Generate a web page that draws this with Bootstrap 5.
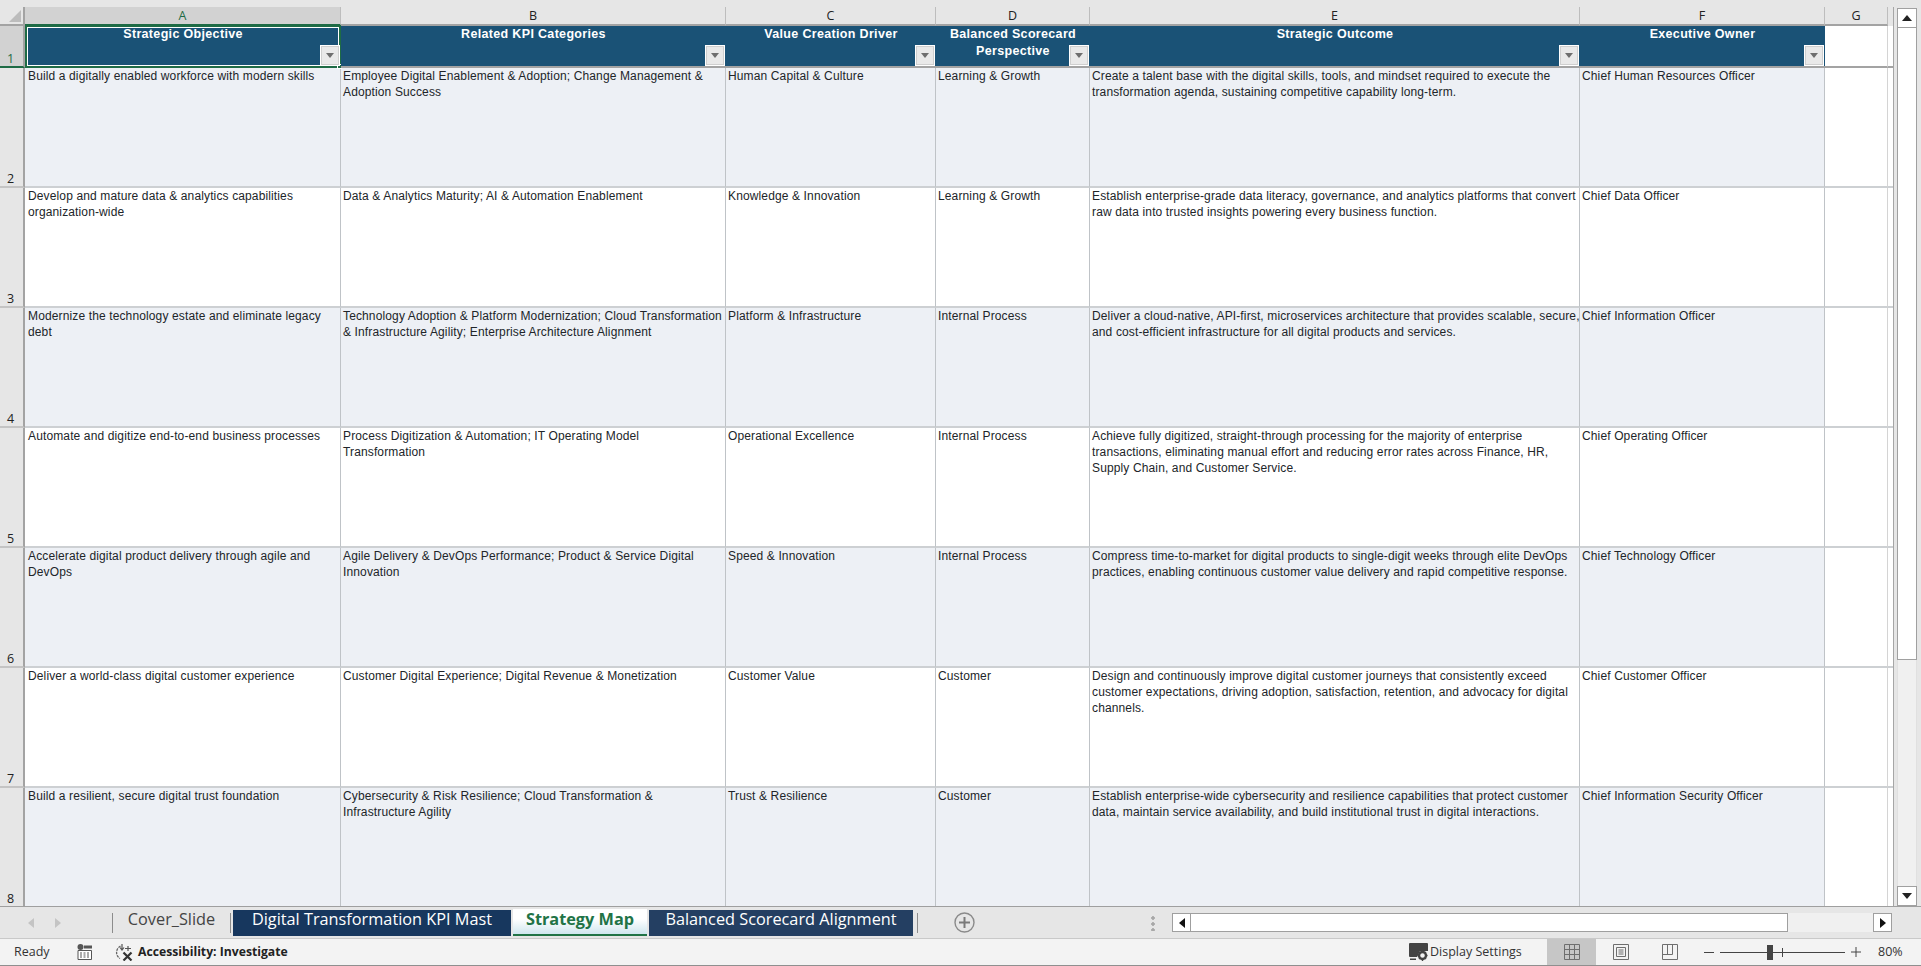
<!DOCTYPE html>
<html lang="en">
<head>
<meta charset="utf-8">
<title>Strategy Map</title>
<link rel="stylesheet" href="https://cdn.jsdelivr.net/npm/bootstrap@5.3.0/dist/css/bootstrap.min.css">
<style>
html,body{height:966px;overflow:hidden;background:#e6e6e6}
body{font-family:"Liberation Sans",Arial,sans-serif;color:#000}
.xl-top{height:7px;background:#e6e6e6}
.xl-main{height:899px}
.xl-pane{width:1894px;height:899px;overflow:hidden;background:#fff;border-right:1px solid #a6a6a6;position:relative}
.xl-right{width:27px;padding-left:3px;background:#e6e6e6;margin-top:-7px}
.xl-sheet{table-layout:fixed;width:1894px;border-collapse:separate;border-spacing:0;margin:0}
.xl-sheet>*>tr>*{padding:0;border:0;box-shadow:none;background:transparent;color:inherit}
.xl-sheet thead tr.xl-cols{height:19px}
.xl-sheet tr.xl-cols th{background:#e6e6e6;border-right:1px solid #bdbdbd;border-bottom:2px solid #a3a3a3;font:400 12.5px/17px "Open Sans",sans-serif;text-align:center;color:#222;vertical-align:middle}
.xl-sheet tr.xl-cols th.xl-sel{background:#d2d2d2;color:#1e6b45;border-bottom-color:#1e6b45}
.xl-sheet tr.xl-cols th.xl-corner{border-right:2px solid #a3a3a3;position:relative}
.xl-corner svg{position:absolute;left:9px;top:3px}
.xl-sheet tbody tr{height:120px}
.xl-sheet tbody tr.xl-head{height:42px}
.xl-sheet tbody th.xl-rn{background:#e6e6e6;border-right:2px solid #a3a3a3;border-bottom:2px solid #c4c4c4;font:400 12.5px/14px "Open Sans",sans-serif;text-align:center;vertical-align:bottom;color:#222;padding-bottom:0;padding-right:2px}
.xl-sheet tbody th.xl-rn.xl-sel{background:#d2d2d2;color:#1e6b45;border-bottom-color:#1e6b45}
.xl-sheet tbody td{font:400 12px/16px "Liberation Sans",Arial,sans-serif;vertical-align:top;padding:0 0 0 2px;border-right:1px solid #bfc3c7;border-bottom:2px solid #cdd0d3;letter-spacing:.13px;background:#fff}
.xl-sheet tbody td:nth-child(2){padding-left:3px}
.xl-sheet tbody td.xl-nw{white-space:nowrap}
.xl-sheet tbody tr.xl-band td{background:#edf0f5}
.xl-sheet tbody td.xl-blank,.xl-sheet tbody tr.xl-band td.xl-blank{background:#fff;border-right-color:#d4d4d4}
.xl-sheet tbody tr.xl-head td.xl-blank{border-bottom-color:#a3a3a3}
.xl-sheet tbody tr.xl-head td.xl-h{background:#1a5276;color:#fff;font-weight:700;font-size:12.5px;text-align:center;line-height:17px;position:relative;padding:0 2px;border-right:0;border-bottom:2px solid #a3a3a3;letter-spacing:.33px}
.xl-filter{position:absolute;right:1px;bottom:0;width:20px;height:21px;background:#e9e9e9;border:1px solid #fff;box-shadow:inset 0 0 0 1px #cfcfcf;display:flex;align-items:center;justify-content:center}
.xl-filter i{display:block;width:0;height:0;border:4px solid transparent;border-top:5px solid #6e6e6e;border-bottom:0}
.xl-selbox{position:absolute;left:0;right:0;top:-1px;bottom:-2px;border:2px solid #1e6b45;box-shadow:inset 0 0 0 1px #fff;pointer-events:none}
.xl-handle{position:absolute;right:-3px;bottom:-3px;width:5px;height:5px;background:#1e6b45;border:1px solid #fff}
.xl-vbtn{width:20px;height:20px;background:#fff;border:1px solid #a0a0a0;display:flex;align-items:center;justify-content:center}
.xl-vup{margin-top:8px}
.xl-arr-u{border:5px solid transparent;border-bottom:6px solid #222;border-top:0}
.xl-arr-d{border:5px solid transparent;border-top:6px solid #222;border-bottom:0}
.xl-arr-l{border:5px solid transparent;border-right:6px solid #111;border-left:0}
.xl-arr-r{border:5px solid transparent;border-left:6px solid #111;border-right:0}
.xl-vthumb{width:20px;height:632px;background:#fff;border:1px solid #a0a0a0;border-top:0}
.xl-vtrack{width:20px;height:226px;background:#f0f0f0;border-left:1px solid #e0e0e0;border-right:1px solid #e0e0e0}
.xl-tabs{height:31px;background:#e6e6e6;border-top:1px solid #9f9f9f;border-bottom:1px solid #c9c9c9;font:400 16.3px/18px "Open Sans",sans-serif;box-sizing:content-box}
.xl-nav{width:112px;padding-left:28px;gap:21px;height:100%}
.xl-nav i{display:block;border:5px solid transparent}
.xl-nav i.l{border-right:6px solid #c4c4c4;border-left:0}
.xl-nav i.r{border-left:6px solid #c4c4c4;border-right:0}
.xl-sep{width:1px;height:20px;background:#8c8c8c;flex:none}
.xl-tab{height:26px;flex:none;text-align:center;white-space:nowrap;margin-top:1px;margin-bottom:1px}
.xl-t0{width:117px;color:#444}
.xl-t1{width:278px;margin-left:2px;background:#17375e;color:#fff}
.xl-t2{width:134px;margin-left:2px;color:#217346;font-weight:700;background:linear-gradient(#fff 40%,#cfe6ee);border-bottom:2px solid #217346;height:27px;margin-top:0;padding-top:1px}
.xl-t3{width:264px;margin-left:2px;background:#243f62;color:#fff}
.xl-add{margin-left:36px;margin-right:176px;flex:none}
.xl-dots{flex:none;width:4px;height:16px;background:radial-gradient(circle,#a8a8a8 1.5px,transparent 2px) 0 0/4px 6px;margin-right:17px}
.xl-hbtn{width:19px;height:19px;background:#fff;border:1px solid #9f9f9f;display:flex;align-items:center;justify-content:center;flex:none}
.xl-hthumb{width:597px;height:19px;background:#fff;border:1px solid #9f9f9f;border-left:0;flex:none}
.xl-htrack{width:85px;height:19px;background:#f0f0f0;flex:none}
.xl-status{height:28px;background:#f3f3f3;border-bottom:2px solid #8f8f8f;font:400 12.5px/26px "Open Sans",sans-serif;color:#333}
.xl-ready{margin-left:14px;width:63px}
.xl-cal{flex:none;margin-right:22px}
.xl-acc{flex:none;margin-right:5px}
.xl-acct{font-weight:700;font-size:12.2px;color:#222;width:1271px;flex:none;white-space:nowrap}
.xl-disp{flex:none;margin-right:2px}
.xl-dispt{width:117px;flex:none;white-space:nowrap}
.xl-view{width:49px;height:26px;display:flex;align-items:center;justify-content:center;flex:none}
.xl-view.xl-on{background:#c6c6c6}
.xl-minus{width:10px;height:1px;background:#444;margin-left:10px;flex:none}
.xl-slide{width:125px;height:1px;background:#444;margin:0 6px;flex:none;position:relative}
.xl-knob{position:absolute;left:47px;top:-7px;width:6px;height:15px;background:#444}
.xl-tick{position:absolute;left:62px;top:-4px;width:1px;height:9px;background:#444}
.xl-plus{flex:none}
.xl-pct{margin-left:17px;flex:none;white-space:nowrap}
</style>
</head>
<body class="m-0">
<div class="d-flex flex-column overflow-hidden">
<div class="xl-top"></div>
<div class="xl-main d-flex">
<div class="xl-pane">
<table class="table xl-sheet">
<colgroup><col style="width:25px"><col style="width:316px"><col style="width:385px"><col style="width:210px"><col style="width:154px"><col style="width:490px"><col style="width:245px"><col style="width:63px"><col></colgroup>
<thead>
<tr class="xl-cols"><th class="xl-corner"><svg width="13" height="13" viewBox="0 0 13 13"><path d="M12 0V12H0Z" fill="#bcbcbc"/></svg></th><th class="xl-sel">A</th><th>B</th><th>C</th><th>D</th><th>E</th><th>F</th><th>G</th><th class="border-0"></th></tr>
</thead>
<tbody>
<tr class="xl-head"><th class="xl-rn xl-sel">1</th>
<td class="xl-h">Strategic Objective<span class="xl-selbox"><span class="xl-handle"></span></span><span class="xl-filter"><i></i></span></td>
<td class="xl-h">Related KPI Categories<span class="xl-filter"><i></i></span></td>
<td class="xl-h">Value Creation Driver<span class="xl-filter"><i></i></span></td>
<td class="xl-h">Balanced Scorecard Perspective<span class="xl-filter"><i></i></span></td>
<td class="xl-h">Strategic Outcome<span class="xl-filter"><i></i></span></td>
<td class="xl-h">Executive Owner<span class="xl-filter"><i></i></span></td>
<td class="xl-blank"></td><td class="xl-blank border-end-0"></td></tr>
<tr class="xl-band"><th class="xl-rn">2</th><td>Build a digitally enabled workforce with modern skills</td><td>Employee Digital Enablement &amp; Adoption; Change Management &amp; Adoption Success</td><td>Human Capital &amp; Culture</td><td>Learning &amp; Growth</td><td>Create a talent base with the digital skills, tools, and mindset required to execute the transformation agenda, sustaining competitive capability long-term.</td><td>Chief Human Resources Officer</td><td class="xl-blank"></td><td class="xl-blank border-end-0"></td></tr>
<tr><th class="xl-rn">3</th><td>Develop and mature data &amp; analytics capabilities organization-wide</td><td>Data &amp; Analytics Maturity; AI &amp; Automation Enablement</td><td>Knowledge &amp; Innovation</td><td>Learning &amp; Growth</td><td>Establish enterprise-grade data literacy, governance, and analytics platforms that convert raw data into trusted insights powering every business function.</td><td>Chief Data Officer</td><td class="xl-blank"></td><td class="xl-blank border-end-0"></td></tr>
<tr class="xl-band"><th class="xl-rn">4</th><td>Modernize the technology estate and eliminate legacy debt</td><td>Technology Adoption &amp; Platform Modernization; Cloud Transformation &amp; Infrastructure Agility; Enterprise Architecture Alignment</td><td>Platform &amp; Infrastructure</td><td>Internal Process</td><td class="xl-nw">Deliver a cloud-native, API-first, microservices architecture that provides scalable, secure,<br>and cost-efficient infrastructure for all digital products and services.</td><td>Chief Information Officer</td><td class="xl-blank"></td><td class="xl-blank border-end-0"></td></tr>
<tr><th class="xl-rn">5</th><td>Automate and digitize end-to-end business processes</td><td>Process Digitization &amp; Automation; IT Operating Model<br>Transformation</td><td>Operational Excellence</td><td>Internal Process</td><td>Achieve fully digitized, straight-through processing for the majority of enterprise transactions, eliminating manual effort and reducing error rates across Finance, HR, Supply Chain, and Customer Service.</td><td>Chief Operating Officer</td><td class="xl-blank"></td><td class="xl-blank border-end-0"></td></tr>
<tr class="xl-band"><th class="xl-rn">6</th><td>Accelerate digital product delivery through agile and DevOps</td><td>Agile Delivery &amp; DevOps Performance; Product &amp; Service Digital Innovation</td><td>Speed &amp; Innovation</td><td>Internal Process</td><td>Compress time-to-market for digital products to single-digit weeks through elite DevOps practices, enabling continuous customer value delivery and rapid competitive response.</td><td>Chief Technology Officer</td><td class="xl-blank"></td><td class="xl-blank border-end-0"></td></tr>
<tr><th class="xl-rn">7</th><td>Deliver a world-class digital customer experience</td><td>Customer Digital Experience; Digital Revenue &amp; Monetization</td><td>Customer Value</td><td>Customer</td><td>Design and continuously improve digital customer journeys that consistently exceed customer expectations, driving adoption, satisfaction, retention, and advocacy for digital channels.</td><td>Chief Customer Officer</td><td class="xl-blank"></td><td class="xl-blank border-end-0"></td></tr>
<tr class="xl-band"><th class="xl-rn">8</th><td>Build a resilient, secure digital trust foundation</td><td>Cybersecurity &amp; Risk Resilience; Cloud Transformation &amp; Infrastructure Agility</td><td>Trust &amp; Resilience</td><td>Customer</td><td>Establish enterprise-wide cybersecurity and resilience capabilities that protect customer data, maintain service availability, and build institutional trust in digital interactions.</td><td>Chief Information Security Officer</td><td class="xl-blank"></td><td class="xl-blank border-end-0"></td></tr>
</tbody>
</table>
</div>
<div class="xl-right d-flex flex-column">
<div class="xl-vbtn xl-vup"><span class="xl-arr-u"></span></div>
<div class="xl-vthumb"></div>
<div class="xl-vtrack"></div>
<div class="xl-vbtn"><span class="xl-arr-d"></span></div>
</div>
</div>
<div class="xl-tabs d-flex align-items-center">
<div class="xl-nav d-flex align-items-center"><i class="l"></i><i class="r"></i></div>
<span class="xl-sep"></span>
<div class="xl-tab xl-t0">Cover_Slide</div>
<span class="xl-sep"></span>
<div class="xl-tab xl-t1">Digital Transformation KPI Mast</div>
<div class="xl-tab xl-t2">Strategy Map</div>
<div class="xl-tab xl-t3">Balanced Scorecard Alignment</div>
<span class="xl-sep ms-1"></span>
<svg class="xl-add" width="21" height="21" viewBox="0 0 21 21"><circle cx="10.5" cy="10.5" r="9.5" fill="none" stroke="#8a8a8a" stroke-width="1.4"/><path d="M10.5 5v11M5 10.5h11" stroke="#7a7a7a" stroke-width="2"/></svg>
<span class="xl-dots"></span>
<div class="xl-hbtn"><span class="xl-arr-l"></span></div>
<div class="xl-hthumb"></div>
<div class="xl-htrack"></div>
<div class="xl-hbtn"><span class="xl-arr-r"></span></div>
</div>
<div class="xl-status d-flex align-items-center">
<div class="xl-ready">Ready</div>
<svg class="xl-cal" width="15" height="16" viewBox="0 0 15 16"><circle cx="3.5" cy="3" r="3" fill="#555"/><path d="M7 1.500h8v3H7z" fill="#555"/><path d="M1 6.500h13.500v9H1z" fill="#fff" stroke="#555"/><path d="M3 9h2M6.500 9h2M10 9h2M3 11h2M6.500 11h2M10 11h2M3 13h2M6.500 13h2M10 13h2" stroke="#555"/></svg>
<svg class="xl-acc" width="19" height="18" viewBox="0 0 19 18"><path d="M6.500 3.200A7 7 0 0 0 6 15.500" fill="none" stroke="#666" stroke-dasharray="2.500 1" stroke-width="1.300"/><path d="M8 1v5M6 4.500 8 7l2-2.500M11 5.500h6M14 3v5" fill="none" stroke="#555" stroke-width="1.200"/><path d="M9.500 9.500 17.500 17.500M17.500 9.500 9.500 17.500" stroke="#333" stroke-width="2.200"/></svg>
<div class="xl-acct">Accessibility: Investigate</div>
<svg class="xl-disp" width="19" height="18" viewBox="0 0 19 18"><path d="M0 1a1 1 0 0 1 1-1h17a1 1 0 0 1 1 1v7h-8l-3 6H1a1 1 0 0 1-1-1z" fill="#444"/><path d="M1 15.500h6v1.500H1z" fill="#444"/><circle cx="13.500" cy="12.500" r="3.500" fill="none" stroke="#444" stroke-width="2.400"/><path d="M13.500 7v2M13.500 16v2M8.500 12.500h2M16.500 12.500h2M10 9l1.500 1.500M15.500 14.500 17 16M17 9l-1.500 1.500M11.500 14.500 10 16" stroke="#444" stroke-width="1.400"/></svg>
<div class="xl-dispt">Display Settings</div>
<div class="xl-view xl-on"><svg width="16" height="16" viewBox="0 0 16 16"><path d="M.5.5h15v15H.5zM5.500.5v15M10.500.5v15M.5 5.500h15M.5 10.500h15" fill="none" stroke="#6e6e6e"/></svg></div>
<div class="xl-view"><svg width="16" height="16" viewBox="0 0 16 16"><path d="M.5.5h15v15H.5zM3.500 3.500h9v9h-9z" fill="none" stroke="#6e6e6e"/><path d="M5.500 6h5M5.500 8h5M5.500 10h5" stroke="#6e6e6e"/></svg></div>
<div class="xl-view"><svg width="16" height="16" viewBox="0 0 16 16"><path d="M.5.5h15v15H.5zM.5 10.500h10V.5M5.500.5v10" fill="none" stroke="#6e6e6e"/></svg></div>
<span class="xl-minus"></span>
<div class="xl-slide"><span class="xl-knob"></span><span class="xl-tick"></span></div>
<svg class="xl-plus" width="10" height="10" viewBox="0 0 10 10"><path d="M0 5h10M5 0v10" stroke="#444"/></svg>
<div class="xl-pct">80%</div>
</div>
</div>
<script src="https://cdn.jsdelivr.net/npm/bootstrap@5.3.0/dist/js/bootstrap.bundle.min.js"></script>
</body>
</html>
